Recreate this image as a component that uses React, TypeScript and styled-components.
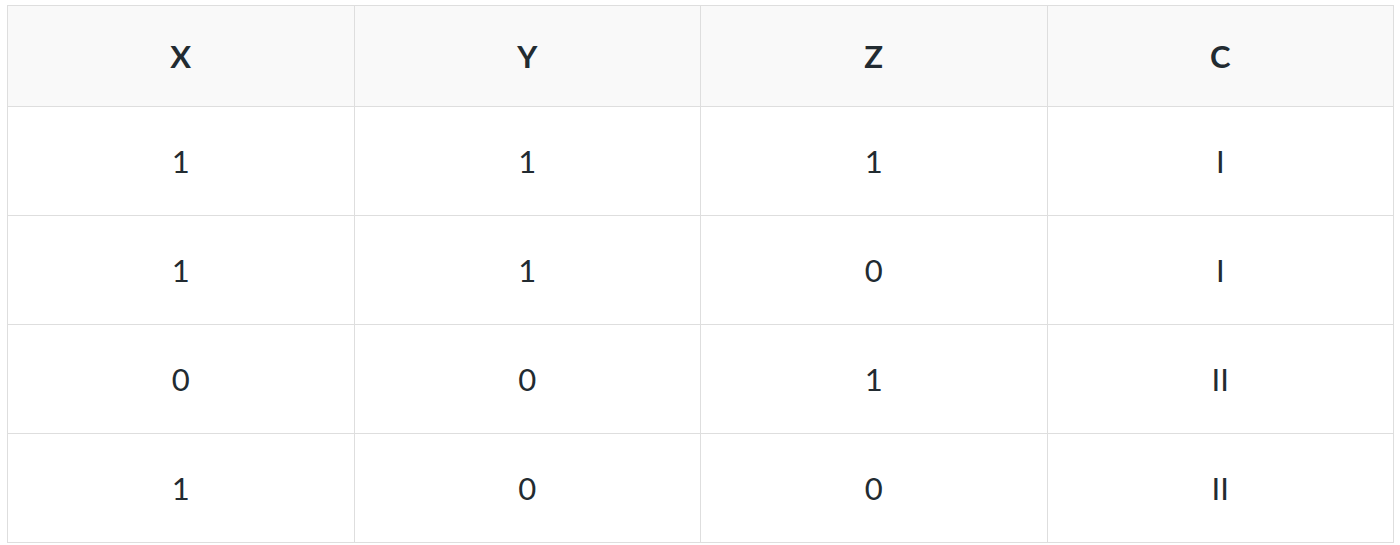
import React from 'react';
import styled, { createGlobalStyle } from 'styled-components';

const GlobalStyle = createGlobalStyle`
  body {
    margin: 0;
    background: #ffffff;
    font-family: Lato, 'Open Sans', sans-serif;
  }
`;

const Wrapper = styled.div`
  padding: 5px 0 0 7px;
`;

const Table = styled.table`
  width: 1387px;
  border-collapse: collapse;
  table-layout: fixed;
  color: #222b31;
  font-size: 31px;
`;

const HeadCell = styled.th`
  height: 100px;
  padding: 0;
  background: #f9f9f9;
  border: 1px solid #dedede;
  font-weight: 700;
  text-align: center;
  vertical-align: middle;
`;

const Cell = styled.td`
  height: 108px;
  padding: 0;
  border: 1px solid #dedede;
  text-align: center;
  vertical-align: middle;
  font-weight: 400;
`;

const columns = ['X', 'Y', 'Z', 'C'];

const rows = [
  ['1', '1', '1', 'I'],
  ['1', '1', '0', 'I'],
  ['0', '0', '1', 'II'],
  ['1', '0', '0', 'II'],
];

const App: React.FunctionComponent = () => (
  <Wrapper>
    <GlobalStyle />
    <Table>
      <thead>
        <tr>
          {columns.map((c) => (
            <HeadCell key={c}>{c}</HeadCell>
          ))}
        </tr>
      </thead>
      <tbody>
        {rows.map((row, i) => (
          <tr key={i}>
            {row.map((v, j) => (
              <Cell key={j}>{v}</Cell>
            ))}
          </tr>
        ))}
      </tbody>
    </Table>
  </Wrapper>
);

export default App;
